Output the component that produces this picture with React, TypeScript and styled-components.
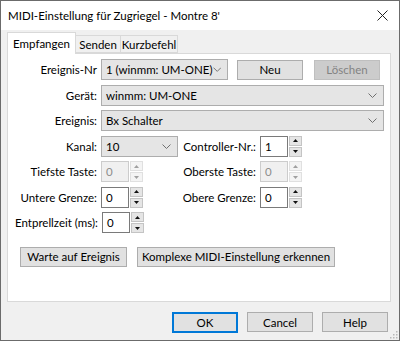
import styled, { createGlobalStyle } from "styled-components";

const GlobalStyle = createGlobalStyle`
  html, body {
    margin: 0;
    padding: 0;
    background: #ffffff;
  }
  body {
    font-family: "Lato", "Noto Sans", sans-serif;
    font-size: 11.5px;
    color: #000000;
  }
`;

const Window = styled.div`
  width: 400px;
  height: 341px;
  box-sizing: border-box;
  border: 1px solid #6b6b6b;
  background: #f0f0f0;
  display: flex;
  flex-direction: column;
  position: relative;
`;

const TitleBar = styled.div`
  height: 29px;
  flex-shrink: 0;
  background: #ffffff;
  display: flex;
  align-items: center;
  justify-content: space-between;
  padding: 0 11px 0 7px;
  font-size: 11.5px;
`;

const CloseIcon = () => (
  <svg width="11" height="11" viewBox="0 0 11 11">
    <path d="M0.5 0.5 L10.5 10.5 M10.5 0.5 L0.5 10.5" stroke="#222" strokeWidth="1" />
  </svg>
);

const Body = styled.div`
  flex: 1;
  display: flex;
  flex-direction: column;
  padding: 2px 8px 0 6px;
`;

const TabStrip = styled.div`
  display: flex;
  align-items: flex-end;
  height: 21px;
  position: relative;
  z-index: 1;
`;

const Tab = styled.div<{ $active?: boolean; $w: number }>`
  width: ${(p) => p.$w}px;
  height: ${(p) => (p.$active ? "22px" : "18px")};
  margin-bottom: ${(p) => (p.$active ? "-1px" : "0")};
  display: flex;
  align-items: center;
  justify-content: center;
  background: ${(p) => (p.$active ? "#ffffff" : "#f0f0f0")};
  border: 1px solid #d9d9d9;
  border-bottom: ${(p) => (p.$active ? "none" : "1px solid #d9d9d9")};
  border-left: ${(p) => (p.$active ? "1px solid #d9d9d9" : "none")};
  box-sizing: border-box;
  padding-top: ${(p) => (p.$active ? "0" : "1px")};
`;

const Panel = styled.div`
  height: 249px;
  flex-shrink: 0;
  background: #ffffff;
  border: 1px solid #d9d9d9;
  box-sizing: border-box;
  padding: 5px 6px 0 7px;
  display: flex;
  flex-direction: column;
  gap: 4.5px;
`;

const Row = styled.div`
  display: flex;
  align-items: center;
  height: 21px;
  gap: 4px;
`;

const Label = styled.div<{ $w?: number }>`
  width: ${(p) => (p.$w ? `${p.$w}px` : "auto")};
  text-align: right;
  flex-shrink: 0;
  white-space: nowrap;
`;

const Select = styled.div<{ $w?: number }>`
  width: ${(p) => (p.$w ? `${p.$w}px` : "auto")};
  flex: ${(p) => (p.$w ? "0 0 auto" : "1")};
  height: 21px;
  box-sizing: border-box;
  background: #e5e5e5;
  border: 1px solid #adadad;
  display: flex;
  align-items: center;
  justify-content: space-between;
  padding: 0 6px 0 4px;
  white-space: nowrap;
`;

const Chevron = () => (
  <svg width="9" height="5" viewBox="0 0 9 5">
    <path d="M0.5 0.5 L4.5 4.5 L8.5 0.5" fill="none" stroke="#707070" strokeWidth="1" />
  </svg>
);

const Button = styled.div<{ $w: number; $ml?: number; $disabled?: boolean; $default?: boolean }>`
  width: ${(p) => p.$w}px;
  margin-left: ${(p) => p.$ml ?? 0}px;
  height: ${(p) => (p.$default ? 21 : 20)}px;
  box-sizing: border-box;
  background: ${(p) => (p.$disabled ? "#cccccc" : "#e1e1e1")};
  border: ${(p) => (p.$default ? "2px solid #0078d7" : p.$disabled ? "1px solid #bfbfbf" : "1px solid #adadad")};
  color: ${(p) => (p.$disabled ? "#838383" : "#000000")};
  display: flex;
  align-items: center;
  justify-content: center;
  flex-shrink: 0;
  white-space: nowrap;
`;

const Spin = styled.div`
  display: flex;
  align-items: stretch;
  height: 21px;
  gap: 1px;
  flex-shrink: 0;
`;

const SpinField = styled.div<{ $disabled?: boolean }>`
  width: 28px;
  box-sizing: border-box;
  border: 1px solid ${(p) => (p.$disabled ? "#cccccc" : "#7a7a7a")};
  background: ${(p) => (p.$disabled ? "#f0f0f0" : "#ffffff")};
  color: ${(p) => (p.$disabled ? "#8d8d8d" : "#000000")};
  display: flex;
  align-items: center;
  padding-left: 4px;
`;

const SpinButtons = styled.div`
  width: 13px;
  display: flex;
  flex-direction: column;
  gap: 1px;
`;

const SpinArrow = styled.div<{ $disabled?: boolean }>`
  flex: 1;
  background: ${(p) => (p.$disabled ? "#f4f4f4" : "#e5e5e5")};
  border: 1px solid ${(p) => (p.$disabled ? "#e0e0e0" : "#c4c4c4")};
  display: flex;
  align-items: center;
  justify-content: center;
`;

const Tri = ({ up, disabled }: { up?: boolean; disabled?: boolean }) => (
  <svg width="5" height="3" viewBox="0 0 5 3">
    <path d={up ? "M0 3 L2.5 0 L5 3 Z" : "M0 0 L2.5 3 L5 0 Z"} fill={disabled ? "#a0a0a0" : "#111"} />
  </svg>
);

const SpinBox = ({ value, disabled }: { value: string; disabled?: boolean }) => (
  <Spin>
    <SpinField $disabled={disabled}>{value}</SpinField>
    <SpinButtons>
      <SpinArrow $disabled={disabled}>
        <Tri up disabled={disabled} />
      </SpinArrow>
      <SpinArrow $disabled={disabled}>
        <Tri disabled={disabled} />
      </SpinArrow>
    </SpinButtons>
  </Spin>
);

const ActionRow = styled.div`
  display: flex;
  gap: 10px;
  margin-top: 9px;
  margin-left: 5px;
`;

const Footer = styled.div`
  display: flex;
  justify-content: flex-end;
  gap: 9px;
  margin-top: 10px;
  padding-right: 3px;
`;

const Grip = styled.svg`
  position: absolute;
  right: 1px;
  bottom: 1px;
`;

const App = () => {
  return (
    <>
      <GlobalStyle />
      <Window>
        <TitleBar>
          <span>MIDI-Einstellung für Zugriegel - Montre 8'</span>
          <CloseIcon />
        </TitleBar>
        <Body>
          <TabStrip>
            <Tab $active $w={69}>Empfangen</Tab>
            <Tab $w={45}>Senden</Tab>
            <Tab $w={57}>Kurzbefehl</Tab>
          </TabStrip>
          <Panel>
            <Row>
              <Label $w={82}>Ereignis-Nr</Label>
              <Select $w={127}>
                <span>1 (winmm: UM-ONE)</span>
                <Chevron />
              </Select>
              <Button $w={66} $ml={5}>Neu</Button>
              <Button $w={66} $ml={7} $disabled>Löschen</Button>
            </Row>
            <Row>
              <Label $w={82}>Gerät:</Label>
              <Select>
                <span>winmm: UM-ONE</span>
                <Chevron />
              </Select>
            </Row>
            <Row>
              <Label $w={82}>Ereignis:</Label>
              <Select>
                <span>Bx Schalter</span>
                <Chevron />
              </Select>
            </Row>
            <Row>
              <Label $w={82}>Kanal:</Label>
              <Select $w={77}>
                <span>10</span>
                <Chevron />
              </Select>
              <Label $w={74}>Controller-Nr.:</Label>
              <SpinBox value="1" />
            </Row>
            <Row>
              <Label $w={82}>Tiefste Taste:</Label>
              <SpinBox value="0" disabled />
              <Label $w={109}>Oberste Taste:</Label>
              <SpinBox value="0" disabled />
            </Row>
            <Row>
              <Label $w={82}>Untere Grenze:</Label>
              <SpinBox value="0" />
              <Label $w={109}>Obere Grenze:</Label>
              <SpinBox value="0" />
            </Row>
            <Row>
              <Label>Entprellzeit (ms):</Label>
              <SpinBox value="0" />
            </Row>
            <ActionRow>
              <Button $w={107}>Warte auf Ereignis</Button>
              <Button $w={198}>Komplexe MIDI-Einstellung erkennen</Button>
            </ActionRow>
          </Panel>
          <Footer>
            <Button $w={66} $default>OK</Button>
            <Button $w={66}>Cancel</Button>
            <Button $w={66}>Help</Button>
          </Footer>
        </Body>
        <Grip width="10" height="10" viewBox="0 0 10 10">
          {[
            [8, 2],
            [8, 5],
            [8, 8],
            [5, 5],
            [5, 8],
            [2, 8],
          ].map(([x, y], i) => (
            <rect key={i} x={x} y={y} width="1.5" height="1.5" fill="#b8b8b8" />
          ))}
        </Grip>
      </Window>
    </>
  );
};

export default App;
